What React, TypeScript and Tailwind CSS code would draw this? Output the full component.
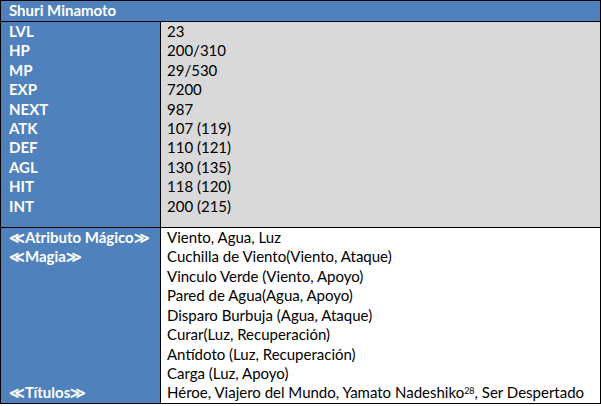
const stats: [string, string][] = [
  ['LVL', '23'],
  ['HP', '200/310'],
  ['MP', '29/530'],
  ['EXP', '7200'],
  ['NEXT', '987'],
  ['ATK', '107 (119)'],
  ['DEF', '110 (121)'],
  ['AGL', '130 (135)'],
  ['HIT', '118 (120)'],
  ['INT', '200 (215)'],
]

const magic = [
  'Cuchilla de Viento(Viento, Ataque)',
  'Vinculo Verde (Viento, Apoyo)',
  'Pared de Agua(Agua, Apoyo)',
  'Disparo Burbuja (Agua, Ataque)',
  'Curar(Luz, Recuperación)',
  'Antídoto (Luz, Recuperación)',
  'Carga (Luz, Apoyo)',
]

export default function App() {
  return (
    <div className="w-[601px] h-[406px] bg-white font-['Lato',sans-serif] text-[15px] leading-[19.4px] text-black">
      <div className="w-[601px] border border-black">
        {/* header */}
        <div className="h-[21px] bg-[#4f81bd] border-b border-black px-[8px] flex items-center font-bold text-white">
          Shuri Minamoto
        </div>

        {/* stats */}
        <div className="grid grid-cols-[160px_1fr] border-b border-black">
          <div className="bg-[#4f81bd] border-r border-black px-[8px] pb-[11px] font-bold text-white">
            {stats.map(([k]) => (
              <div key={k}>{k}</div>
            ))}
          </div>
          <div className="bg-[#d9d9d9] px-[6px] pb-[11px]">
            {stats.map(([k, v]) => (
              <div key={k}>{v}</div>
            ))}
          </div>
        </div>

        {/* abilities */}
        <div className="grid grid-cols-[160px_1fr]">
          <div className="bg-[#4f81bd] border-r border-black px-[8px] font-bold text-white flex flex-col">
            <div>≪Atributo Mágico≫</div>
            <div>≪Magia≫</div>
            <div className="mt-auto">≪Títulos≫</div>
          </div>
          <div className="bg-white px-[6px]">
            <div>Viento, Agua, Luz</div>
            {magic.map((m) => (
              <div key={m}>{m}</div>
            ))}
            <div>
              Héroe, Viajero del Mundo, Yamato Nadeshiko
              <sup className="text-[9px]">28</sup>, Ser Despertado
            </div>
          </div>
        </div>
      </div>
    </div>
  )
}
